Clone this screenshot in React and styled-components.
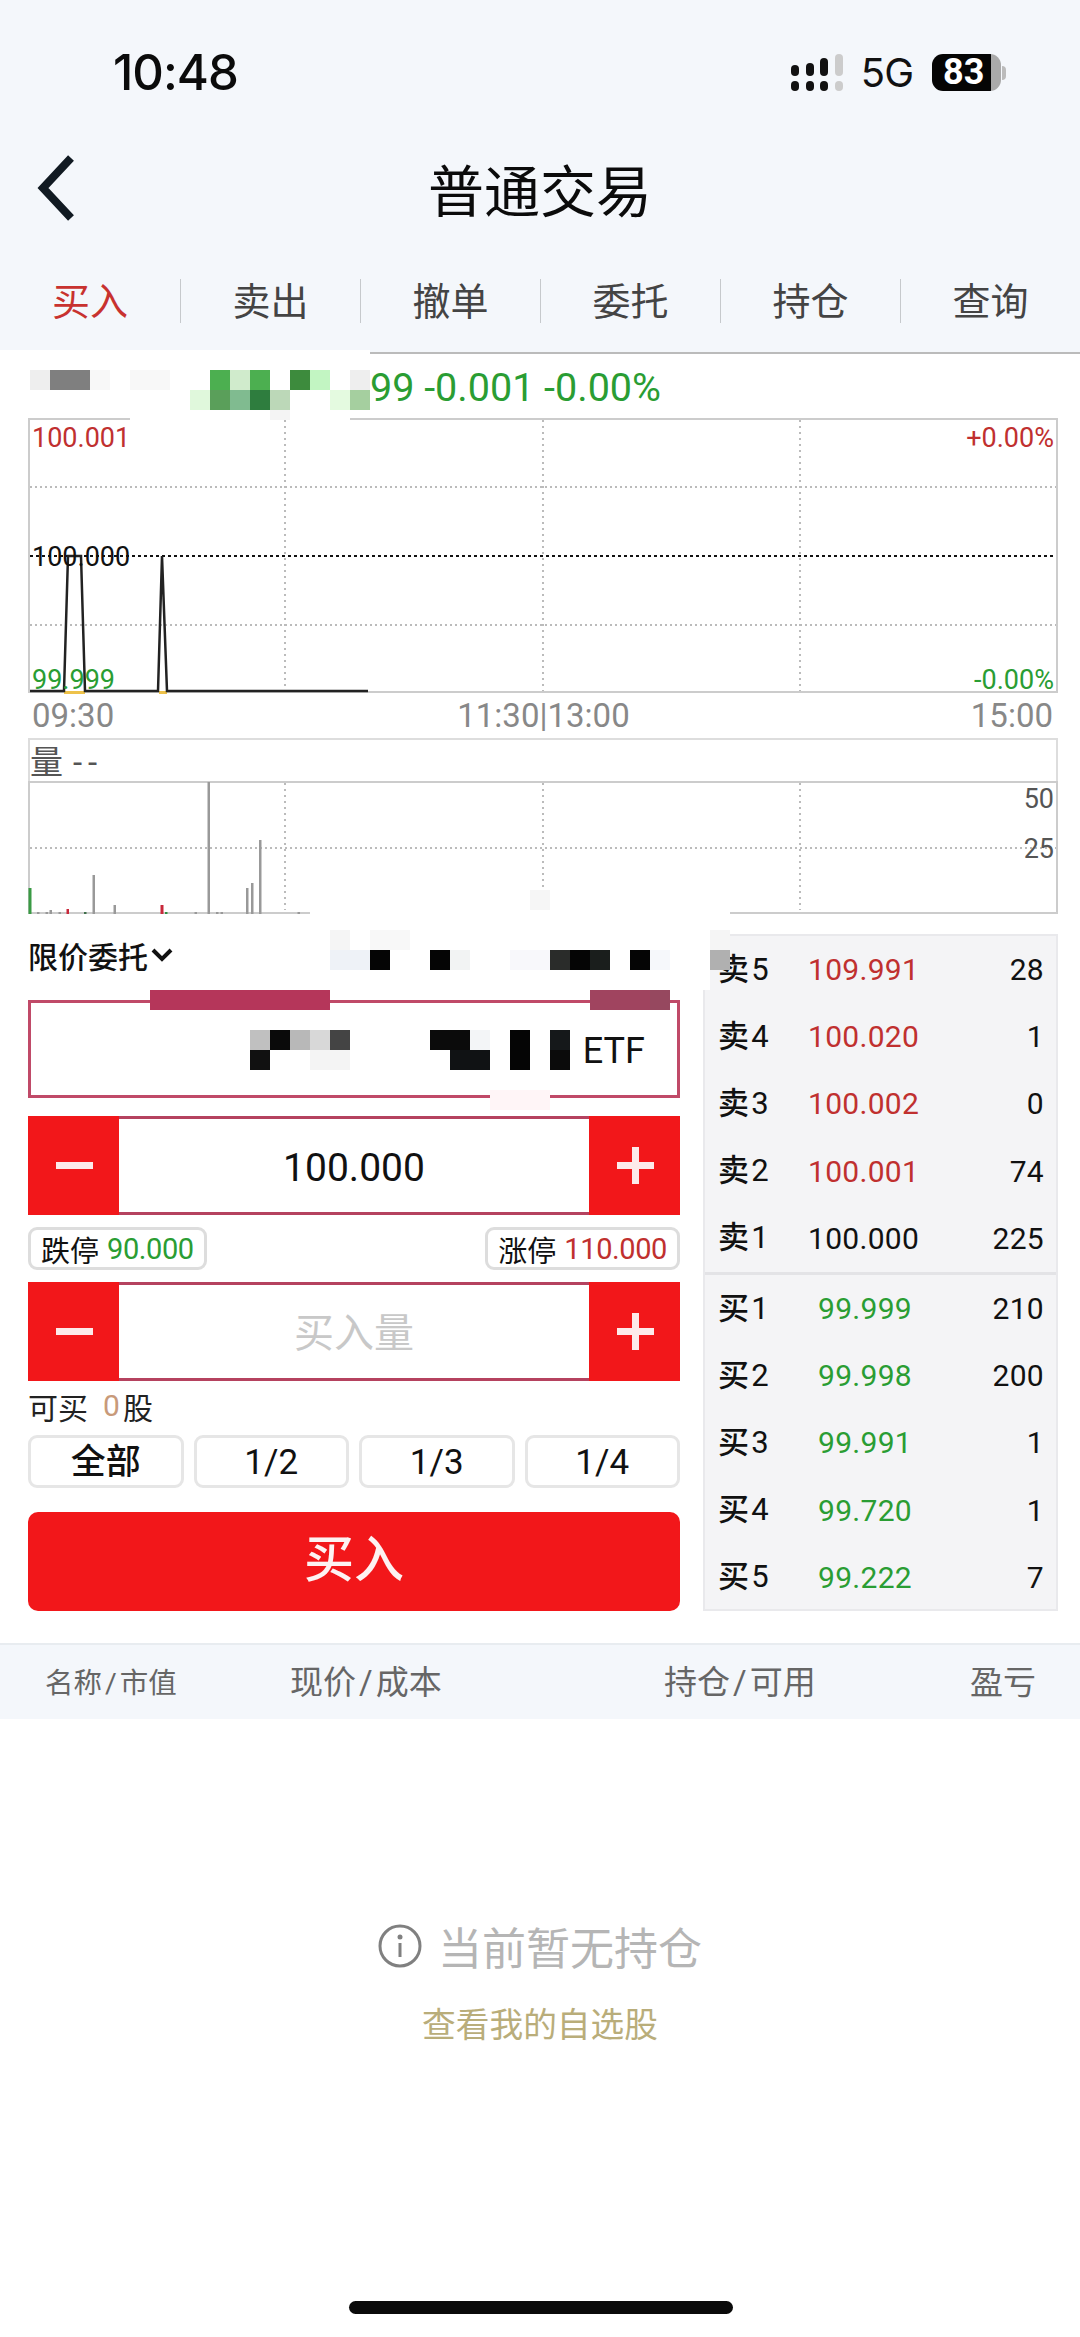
import React from 'react';
import styled, { createGlobalStyle } from 'styled-components';

const GlobalStyle = createGlobalStyle`
  html, body {
    margin: 0;
    padding: 0;
    background: #fff;
  }

  body {
    font-family: Roboto, "Noto Sans CJK SC", sans-serif;
    color: #111;
  }
`;

const RED = '#c0302f';
const GREEN = '#2a9d33';
const BRAND = '#f2171a';

const Page = styled.div`
  position: relative;
  width: 1080px;
  height: 2337px;
  overflow: hidden;
  background: #fff;
`;

const Header = styled.header`
  height: 354px;
  background: #f4f7fb;
  box-sizing: border-box;
  border-bottom: 2px solid #bbb;
`;

const StatusBar = styled.div`
  display: flex;
  align-items: center;
  justify-content: space-between;
  height: 144px;
  padding: 0 79px 0 113px;
`;

const Time = styled.span`
  font-family: Inter, sans-serif;
  font-size: 49px;
  font-weight: 500;
  letter-spacing: -1px;
  color: #0b0b0b;
`;

const StatusIcons = styled.div`
  display: flex;
  align-items: center;
`;

const NetworkLabel = styled.span`
  margin: 0 19px 0 16px;
  font-family: Inter, sans-serif;
  font-size: 40px;
  letter-spacing: -1px;
  color: #111;
`;

const Battery = styled.div`
  position: relative;
  display: flex;
  align-items: center;
  width: 69px;
  height: 37px;
  padding-left: 11px;
  box-sizing: border-box;
  border-radius: 11px;
  font-family: Roboto, sans-serif;
  font-size: 36px;
  font-weight: 700;
  color: #fff;
  background: linear-gradient(90deg, #050505 59px, #aaa 59px);

  &::after {
    content: '';
    position: absolute;
    top: 12px;
    right: -5px;
    width: 4px;
    height: 14px;
    border-radius: 0 4px 4px 0;
    background: #bbb;
  }
`;

const NavBar = styled.div`
  position: relative;
  display: flex;
  align-items: center;
  justify-content: center;
  height: 94px;
  padding-top: 3px;
  box-sizing: border-box;
`;

const BackIcon = styled.svg`
  position: absolute;
  top: 11px;
  left: 37px;
`;

const Title = styled.h1`
  margin: 0;
  font-size: 56px;
  font-weight: 400;
  line-height: 1;
  color: #0b0b0b;
`;

const Tabs = styled.nav`
  display: flex;
  height: 102px;
  margin-top: 12px;
  align-items: center;
`;

const Tab = styled.div`
  width: 180px;
  height: 44px;
  box-sizing: border-box;
  border-left: ${({ $first }) => ($first ? 'none' : '1px solid #c6c9cc')};
  text-align: center;
  font-size: 38px;
  line-height: 47px;
  color: ${({ $active }) => ($active ? '#c8322f' : '#444')};
`;

const QuoteBar = styled.div`
  display: flex;
  align-items: center;
  height: 64px;
  padding: 3px 0 0 370px;
  box-sizing: border-box;
  font-size: 39.5px;
  color: ${GREEN};
`;

const Chart = styled.div`
  position: relative;
  width: 1030px;
  height: ${({ $height }) => $height}px;
  margin-left: 28px;
  box-sizing: border-box;
  border: 2px solid #ccc;
`;

const ChartSvg = styled.svg`
  display: block;
  width: 100%;
  height: 100%;
  overflow: visible;
`;

const ChartLabel = styled.span`
  position: absolute;
  top: ${({ $top }) => $top}px;
  ${({ $right }) => ($right ? 'right: 2px;' : 'left: 2px;')}
  font-size: 27px;
  line-height: 28px;
  color: ${({ $color }) => $color};
`;

const TimeAxis = styled.div`
  position: relative;
  display: flex;
  justify-content: space-between;
  align-items: center;
  width: 1021px;
  height: 45px;
  margin-left: 32px;
  font-size: 33px;
  color: #888;
`;

const MidTime = styled.span`
  margin-left: 2px;
`;

const VolumeHead = styled.div`
  width: 1030px;
  height: 43px;
  margin-left: 28px;
  box-sizing: border-box;
  border: 2px solid #ddd;
  border-bottom: none;
  font-size: 33px;
  line-height: 45px;
  letter-spacing: 1px;
  color: #555;
`;

const Dashes = styled.span`
  margin-left: 9px;
  letter-spacing: 6px;
`;

const TradeArea = styled.section`
  display: flex;
  gap: 23px;
  margin: 20px 0 0 28px;
`;

const OrderForm = styled.div`
  width: 652px;
`;

const OrderType = styled.div`
  display: flex;
  align-items: center;
  height: 66px;
  padding-bottom: 24px;
  box-sizing: border-box;
  font-size: 30px;
  font-weight: 500;
  color: #111;

  svg {
    margin-left: 3px;
  }
`;

const NameBox = styled.div`
  display: flex;
  justify-content: flex-end;
  align-items: center;
  height: 98px;
  padding: 4px 32px 0 0;
  box-sizing: border-box;
  border: 3px solid #c04a68;
  font-size: 36px;
  color: #111;
`;

const Stepper = styled.div`
  display: flex;
  height: 99px;
  margin-top: ${({ $gap }) => $gap}px;
  box-sizing: border-box;
  border: 3px solid #b5425f;
`;

const StepButton = styled.div`
  position: relative;
  flex: none;
  width: 91px;
  margin: -3px ${({ $plus }) => ($plus ? '-3px -3px 0' : '0 -3px -3px')};
  background: ${BRAND};

  &::before {
    content: '';
    position: absolute;
    top: 46px;
    left: 28px;
    width: 37px;
    height: 7px;
    background: #fdeaea;
  }

  ${({ $plus }) => $plus && `
    &::after {
      content: '';
      position: absolute;
      top: 31px;
      left: 43px;
      width: 7px;
      height: 37px;
      background: #fdeaea;
    }
  `}
`;

const StepValue = styled.div`
  flex: 1;
  text-align: center;
  font-size: ${({ $placeholder }) => ($placeholder ? '40px' : '39px')};
  line-height: ${({ $placeholder }) => ($placeholder ? '97px' : '99px')};
  color: ${({ $placeholder }) => ($placeholder ? '#c8c8c8' : '#111')};
`;

const LimitRow = styled.div`
  display: flex;
  justify-content: space-between;
  margin-top: 12px;
`;

const LimitChip = styled.div`
  display: flex;
  align-items: center;
  gap: 8px;
  height: 43px;
  padding: 0 10px;
  box-sizing: border-box;
  border: 3px solid #ddd;
  border-radius: 9px;
  font-size: 29px;
  color: #111;
`;

const Colored = styled.span`
  letter-spacing: -0.4px;
  color: ${({ $color }) => $color};
`;

const Available = styled.div`
  display: flex;
  align-items: center;
  height: 54px;
  padding-bottom: 5px;
  box-sizing: border-box;
  font-size: 30px;
  color: #222;
`;

const AvailableCount = styled.span`
  margin-left: 15px;
  margin-right: 3px;
  color: #c89a7a;
`;

const QuickRow = styled.div`
  display: grid;
  grid-template-columns: repeat(4, 1fr);
  gap: 10px;
`;

const QuickButton = styled.div`
  height: 53px;
  box-sizing: border-box;
  border: 3px solid #e6e6e6;
  border-radius: 9px;
  text-align: center;
  font-size: 35px;
  font-weight: ${({ $strong }) => ($strong ? 500 : 400)};
  line-height: 50px;
  color: #111;
`;

const BuyButton = styled.div`
  height: 99px;
  margin-top: 24px;
  border-radius: 10px;
  text-align: center;
  font-size: 50px;
  font-weight: 500;
  line-height: 97px;
  color: #fdf2f2;
  background: ${BRAND};
`;

const Depth = styled.aside`
  width: 355px;
  height: 677px;
  box-sizing: border-box;
  border: 2px solid #e9e9ec;
  background: #f4f4f6;
`;

const DepthGroup = styled.div`
  border-top: ${({ $divided }) => ($divided ? '3px solid #e3e3e6' : 'none')};
`;

const DepthRow = styled.div`
  display: grid;
  grid-template-columns: 90px 104px 132px;
  align-items: center;
  height: 67.2px;
  padding-left: 13px;
  font-size: 30px;
  letter-spacing: 0.3px;
  color: #111;
`;

const DepthLabel = styled.span`
  display: flex;
  align-items: center;
  gap: 2px;
  font-size: 31px;
  font-weight: 500;
  line-height: 36px;
`;

const DepthLevel = styled.span`
  font-weight: 400;
`;

const DepthPrice = styled.span`
  text-align: right;
  color: ${({ $color }) => $color};
`;

const DepthVolume = styled.span`
  text-align: right;
`;

const TableHead = styled.div`
  display: grid;
  grid-template-columns: 245px 374px 306px 1fr;
  align-items: center;
  height: 76px;
  margin-top: 32px;
  padding: 0 0 4px 45px;
  box-sizing: border-box;
  border-top: 2px solid #e8ecf0;
  background: #f4f7fb;
  color: #666;
`;

const HeadCell = styled.span`
  font-size: ${({ $small }) => ($small ? '28.5px' : '33px')};
`;

const Slash = styled.span`
  margin: 0 3px;
`;

const Empty = styled.div`
  display: flex;
  flex-direction: column;
  align-items: center;
  padding-top: 203px;
`;

const EmptyText = styled.div`
  display: flex;
  align-items: center;
  gap: 16px;
  height: 48px;
  font-size: 44px;
  color: #b5b5b5;
`;

const WatchLink = styled.div`
  margin-top: 34px;
  font-size: 33.7px;
  line-height: 44px;
  color: #b9ad7a;
`;

const HomeIndicator = styled.div`
  position: absolute;
  bottom: 23px;
  left: 349px;
  width: 384px;
  height: 13px;
  border-radius: 7px;
  background: #0a0a0a;
`;

// pixelated cover over the stock name, page coords in the cell lists
const Mosaic = styled.svg`
  position: absolute;
  top: ${({ $top }) => $top}px;
  left: 0;
  z-index: 5;
  pointer-events: none;
`;

const quoteCells = [
  [0, 350, 370, 60, '#fff'], [130, 410, 220, 10, '#fff'],
  [30, 370, 20, 20, '#eee'], [50, 370, 40, 20, '#7f7f7f'], [90, 370, 20, 20, '#f8f8f8'], [130, 370, 40, 20, '#f8f8f8'],
  [210, 370, 20, 20, '#4caf50'], [230, 370, 20, 20, '#d0ebcc'], [250, 370, 20, 20, '#4caf50'],
  [290, 370, 20, 20, '#3d8b3d'], [310, 370, 20, 20, '#c2f5c2'], [350, 370, 20, 20, '#eee'],
  [190, 390, 20, 20, '#e0f8dc'], [210, 390, 20, 20, '#5a9f5a'], [230, 390, 20, 20, '#80bb90'],
  [250, 390, 20, 20, '#2e7d3e'], [270, 390, 20, 20, '#bcd8b8'], [330, 390, 20, 20, '#e4fae0'],
  [350, 390, 20, 20, '#a5cf9f'], [270, 410, 20, 10, '#f4f4f4'],
];

const tradeCells = [
  [310, 889, 420, 41, '#fff'], [330, 930, 373, 58, '#fff'], [703, 930, 7, 60, '#fff'],
  [710, 930, 20, 20, '#f5f5f5'], [710, 950, 20, 20, '#b0b0b0'], [530, 890, 20, 20, '#f6f6f6'],
  [330, 930, 20, 20, '#f5f5f5'], [370, 930, 40, 20, '#f8f8f8'],
  [330, 950, 40, 20, '#eef2f7'], [370, 950, 20, 20, '#050505'], [430, 950, 20, 20, '#050505'],
  [450, 950, 20, 20, '#f2f3f3'], [510, 950, 40, 20, '#f8f8fb'], [550, 950, 20, 20, '#2a2c2a'],
  [570, 950, 20, 20, '#050505'], [590, 950, 20, 20, '#1a1e1c'], [630, 950, 20, 20, '#050505'],
  [650, 950, 20, 20, '#f6f8fb'],
  [150, 990, 180, 20, '#b5365a'], [590, 990, 60, 20, '#a0445f'], [650, 990, 20, 20, '#96485f'],
  [250, 1030, 20, 20, '#c0c0c0'], [270, 1030, 20, 20, '#0a0a0a'], [290, 1030, 20, 20, '#b8b8b8'],
  [310, 1030, 20, 20, '#d8d8d8'], [330, 1030, 20, 20, '#444'],
  [250, 1050, 20, 20, '#111'], [310, 1050, 40, 20, '#f4f4f4'],
  [430, 1030, 40, 20, '#0b0b0b'], [470, 1030, 20, 20, '#f3f5f7'], [510, 1030, 20, 20, '#050505'],
  [550, 1030, 20, 20, '#15181a'], [450, 1050, 40, 20, '#101214'], [510, 1050, 20, 20, '#050505'],
  [550, 1050, 20, 20, '#0b0b0b'], [490, 1090, 60, 20, '#fff5f7'],
];

const MosaicCells = ({ cells, top, height }) => (
  <Mosaic $top={top} width="1080" height={height} viewBox={`0 ${top} 1080 ${height}`}>
    {cells.map(([x, y, w, h, fill]) => (
      <rect key={`${x}-${y}-${w}`} x={x} y={y} width={w} height={h} fill={fill} />
    ))}
  </Mosaic>
);

const volumeBars = [
  [30, 887, '#3a9a44', 3], [38.5, 911, '#999'], [47, 911, '#999'], [51, 909, '#999'], [60, 911, '#999'],
  [68, 908, '#c8283a'], [85.5, 911, '#3f6f4a'], [94, 874, '#999'], [115, 904, '#999'],
  [162, 904, '#c8283a', 3], [166.5, 911, '#2f8f3f'], [196, 911, '#999'], [209, 781, '#999'],
  [217.5, 911, '#999'], [222, 911, '#999'], [247.5, 887, '#999'], [252.5, 882, '#999'],
  [260.5, 839, '#999'], [299, 911, '#999'],
];

const gridX = [285, 543, 800];

const PriceChart = () => (
  <Chart $height={275}>
    <ChartSvg viewBox="30 420 1026 271">
      {[487, 625].map((y) => (
        <line key={y} x1="30" x2="1056" y1={y} y2={y} stroke="#bbb" strokeWidth="2" strokeDasharray="2 3" />
      ))}
      <line x1="30" x2="1056" y1="556" y2="556" stroke="#111" strokeWidth="2" strokeDasharray="3 3" />
      {gridX.map((x) => (
        <line key={x} x1={x} x2={x} y1="420" y2="691" stroke="#bbb" strokeWidth="2" strokeDasharray="2 4" />
      ))}
      <path d="M64 692.5h21M159 692.5h8" stroke="#eec24a" strokeWidth="3" />
      <path
        d="M30 691H64L68 556H81L85 691H158L162 556L167 691H368"
        fill="none"
        stroke="#222"
        strokeWidth="2.5"
      />
    </ChartSvg>
    <ChartLabel $top={4} $color={RED}>100.001</ChartLabel>
    <ChartLabel $top={123} $color="#111">100.000</ChartLabel>
    <ChartLabel $top={246} $color={GREEN}>99.999</ChartLabel>
    <ChartLabel $right $top={4} $color={RED}>+0.00%</ChartLabel>
    <ChartLabel $right $top={246} $color={GREEN}>-0.00%</ChartLabel>
  </Chart>
);

const VolumeChart = () => (
  <Chart $height={133}>
    <ChartSvg viewBox="30 782 1026 129">
      <line x1="30" x2="1056" y1="847" y2="847" stroke="#bbb" strokeWidth="2" strokeDasharray="2 3" />
      {gridX.map((x) => (
        <line key={x} x1={x} x2={x} y1="782" y2="909" stroke="#bbb" strokeWidth="2" strokeDasharray="2 4" />
      ))}
      {volumeBars.map(([x, y, fill, w]) => (
        <rect key={x} x={x - 1.5} y={y} width={w || 2.5} height={913 - y} fill={fill} />
      ))}
    </ChartSvg>
    <ChartLabel $right $top={2} $color="#555">50</ChartLabel>
    <ChartLabel $right $top={52} $color="#555">25</ChartLabel>
  </Chart>
);

const asks = [
  ['卖', '5', '109.991', '28', RED],
  ['卖', '4', '100.020', '1', RED],
  ['卖', '3', '100.002', '0', RED],
  ['卖', '2', '100.001', '74', RED],
  ['卖', '1', '100.000', '225', '#111'],
];

const bids = [
  ['买', '1', '99.999', '210'],
  ['买', '2', '99.998', '200'],
  ['买', '3', '99.991', '1'],
  ['买', '4', '99.720', '1'],
  ['买', '5', '99.222', '7'],
];

const DepthLine = ({ side, level, price, volume, color }) => (
  <DepthRow>
    <DepthLabel>{side}<DepthLevel>{level}</DepthLevel></DepthLabel>
    <DepthPrice $color={color}>{price}</DepthPrice>
    <DepthVolume>{volume}</DepthVolume>
  </DepthRow>
);

const tabs = ['买入', '卖出', '撤单', '委托', '持仓', '查询'];

const App = () => (
  <Page>
    <GlobalStyle />
    <Header>
      <StatusBar>
        <Time>10:48</Time>
        <StatusIcons>
          <svg width="54" height="37" viewBox="0 0 54 37">
            <rect x="0" y="11" width="8" height="11" rx="4" fill="#111" />
            <rect x="0" y="27" width="8" height="10" rx="4" fill="#111" />
            <rect x="15" y="9" width="8" height="13" rx="4" fill="#111" />
            <rect x="15" y="27" width="8" height="10" rx="4" fill="#111" />
            <rect x="29" y="4" width="8" height="18" rx="4" fill="#111" />
            <rect x="29" y="27" width="8" height="10" rx="4" fill="#111" />
            <rect x="44" y="0" width="8" height="22" rx="4" fill="#ccc" />
            <rect x="44" y="27" width="8" height="10" rx="4" fill="#ccc" />
          </svg>
          <NetworkLabel>5G</NetworkLabel>
          <Battery>83</Battery>
        </StatusIcons>
      </StatusBar>
      <NavBar>
        <BackIcon width="38" height="66" viewBox="0 0 38 66">
          <path d="M34 3L6 33L34 63" fill="none" stroke="#111a22" strokeWidth="8" />
        </BackIcon>
        <Title>普通交易</Title>
      </NavBar>
      <Tabs>
        {tabs.map((tab, i) => (
          <Tab key={tab} $first={i === 0} $active={i === 0}>{tab}</Tab>
        ))}
      </Tabs>
    </Header>

    <QuoteBar>99 -0.001 -0.00%</QuoteBar>
    <PriceChart />
    <TimeAxis>
      <span>09:30</span>
      <MidTime>11:30|13:00</MidTime>
      <span>15:00</span>
    </TimeAxis>
    <VolumeHead>量<Dashes>--</Dashes></VolumeHead>
    <VolumeChart />

    <TradeArea>
      <OrderForm>
        <OrderType>
          限价委托
          <svg width="22" height="14" viewBox="0 0 22 14">
            <path d="M2 2L11 11L20 2" fill="none" stroke="#111" strokeWidth="4" />
          </svg>
        </OrderType>
        <NameBox>ETF</NameBox>
        <Stepper $gap={18}>
          <StepButton />
          <StepValue>100.000</StepValue>
          <StepButton $plus />
        </Stepper>
        <LimitRow>
          <LimitChip>跌停<Colored $color={GREEN}>90.000</Colored></LimitChip>
          <LimitChip>涨停<Colored $color={RED}>110.000</Colored></LimitChip>
        </LimitRow>
        <Stepper $gap={12}>
          <StepButton />
          <StepValue $placeholder>买入量</StepValue>
          <StepButton $plus />
        </Stepper>
        <Available>可买<AvailableCount>0</AvailableCount>股</Available>
        <QuickRow>
          <QuickButton $strong>全部</QuickButton>
          <QuickButton>1/2</QuickButton>
          <QuickButton>1/3</QuickButton>
          <QuickButton>1/4</QuickButton>
        </QuickRow>
        <BuyButton>买入</BuyButton>
      </OrderForm>
      <Depth>
        <DepthGroup>
          {asks.map(([side, level, price, volume, color]) => (
            <DepthLine key={side + level} side={side} level={level} price={price} volume={volume} color={color} />
          ))}
        </DepthGroup>
        <DepthGroup $divided>
          {bids.map(([side, level, price, volume]) => (
            <DepthLine key={side + level} side={side} level={level} price={price} volume={volume} color={GREEN} />
          ))}
        </DepthGroup>
      </Depth>
    </TradeArea>

    <TableHead>
      <HeadCell $small>名称<Slash>/</Slash>市值</HeadCell>
      <HeadCell>现价<Slash>/</Slash>成本</HeadCell>
      <HeadCell>持仓<Slash>/</Slash>可用</HeadCell>
      <HeadCell>盈亏</HeadCell>
    </TableHead>

    <Empty>
      <EmptyText>
        <svg width="44" height="44" viewBox="0 0 44 44">
          <circle cx="22" cy="22" r="20" fill="none" stroke="#808080" strokeWidth="3" />
          <circle cx="22" cy="13" r="2.5" fill="#808080" />
          <rect x="20.5" y="19" width="3" height="14" fill="#808080" />
        </svg>
        当前暂无持仓
      </EmptyText>
      <WatchLink>查看我的自选股</WatchLink>
    </Empty>

    <HomeIndicator />
    <MosaicCells cells={quoteCells} top={350} height={70} />
    <MosaicCells cells={tradeCells} top={889} height={221} />
  </Page>
);

export default App;
